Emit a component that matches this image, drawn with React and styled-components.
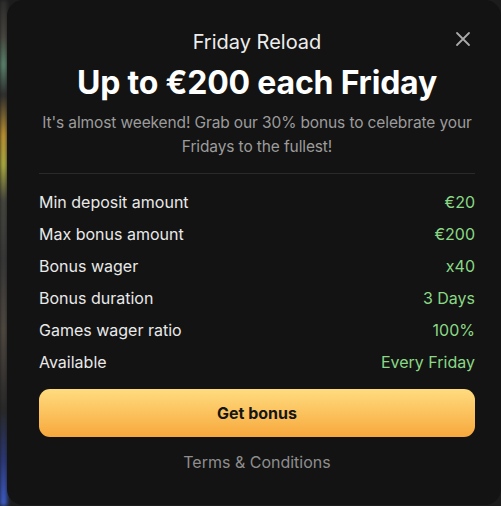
import styled, { createGlobalStyle } from "styled-components";

const GlobalStyle = createGlobalStyle`
  html, body {
    margin: 0;
    padding: 0;
    background: #1c1c1c;
    font-family: Inter, "Noto Sans", sans-serif;
  }
`;

const rows = [
  { label: "Min deposit amount", value: "€20" },
  { label: "Max bonus amount", value: "€200" },
  { label: "Bonus wager", value: "x40" },
  { label: "Bonus duration", value: "3 Days" },
  { label: "Games wager ratio", value: "100%" },
  { label: "Available", value: "Every Friday" },
];

function App() {
  return (
    <>
      <GlobalStyle />
      <Page>
        <Backdrop />
        <Modal>
          <CloseButton aria-label="Close">
            <svg width="16" height="16" viewBox="0 0 16 16" fill="none">
              <path
                d="M2 2L14 14M14 2L2 14"
                stroke="currentColor"
                strokeWidth="1.8"
                strokeLinecap="round"
              />
            </svg>
          </CloseButton>
          <Header>
            <Kicker>Friday Reload</Kicker>
            <Title>Up to €200 each Friday</Title>
            <Lead>
              It's almost weekend! Grab our 30% bonus to celebrate your Fridays
              to the fullest!
            </Lead>
          </Header>
          <Divider />
          <Details>
            {rows.map((r) => (
              <Row key={r.label}>
                <Label>{r.label}</Label>
                <Value>{r.value}</Value>
              </Row>
            ))}
          </Details>
          <BonusButton>Get bonus</BonusButton>
          <Terms href="#">Terms &amp; Conditions</Terms>
        </Modal>
      </Page>
    </>
  );
}

const Page = styled.div`
  display: flex;
  width: 501px;
  height: 506px;
  overflow: hidden;
`;

const Backdrop = styled.div`
  flex: 0 0 7px;
  filter: blur(2px);
  background: linear-gradient(
    180deg,
    #2e2e2e 0px,
    #4a4740 35px,
    #5f8a72 65px,
    #2f2f2f 95px,
    #c89a32 135px,
    #b5b542 165px,
    #4a4a42 200px,
    #3a3a3a 260px,
    #544c44 330px,
    #2a2a2a 410px,
    #2c3a80 460px,
    #4062d8 506px
  );
`;

const Modal = styled.div`
  position: relative;
  flex: 0 0 494px;
  height: 505px;
  box-sizing: border-box;
  padding: 29px 26px 0 32px;
  background: #131313;
  border-radius: 16px;
  display: flex;
  flex-direction: column;
`;

const CloseButton = styled.button`
  position: absolute;
  top: 31px;
  right: 30px;
  width: 16px;
  height: 16px;
  padding: 0;
  border: 0;
  background: none;
  color: #a9a9a9;
  cursor: pointer;
  display: flex;
`;

const Header = styled.div`
  display: flex;
  flex-direction: column;
  align-items: center;
  text-align: center;
`;

const Kicker = styled.div`
  font-size: 20px;
  line-height: 26px;
  color: #ededed;
`;

const Title = styled.h2`
  margin: 8px 0 0;
  font-size: 32px;
  line-height: 40px;
  font-weight: 700;
  color: #ffffff;
  letter-spacing: -0.2px;
`;

const Lead = styled.p`
  margin: 8px 0 0;
  font-size: 15.5px;
  line-height: 24px;
  letter-spacing: -0.12px;
  color: #9c9c9c;
`;

const Divider = styled.hr`
  margin: 14px 0 0;
  border: 0;
  height: 1px;
  background: #2a2a2a;
`;

const Details = styled.div`
  display: flex;
  flex-direction: column;
  margin-top: 12px;
`;

const Row = styled.div`
  display: flex;
  justify-content: space-between;
  align-items: center;
  height: 32px;
  font-size: 16px;
`;

const Label = styled.span`
  color: #e9e9e9;
`;

const Value = styled.span`
  color: #8ad886;
`;

const BonusButton = styled.button`
  margin-top: 11px;
  height: 48px;
  border: 0;
  border-radius: 11px;
  background: linear-gradient(180deg, #ffdc7f 0%, #f7a83c 100%);
  color: #161616;
  font-family: inherit;
  font-size: 16px;
  font-weight: 700;
  cursor: pointer;
`;

const Terms = styled.a`
  align-self: center;
  margin-top: 14px;
  font-size: 16px;
  line-height: 22px;
  color: #8e8e8e;
  text-decoration: none;
`;

export default App;
